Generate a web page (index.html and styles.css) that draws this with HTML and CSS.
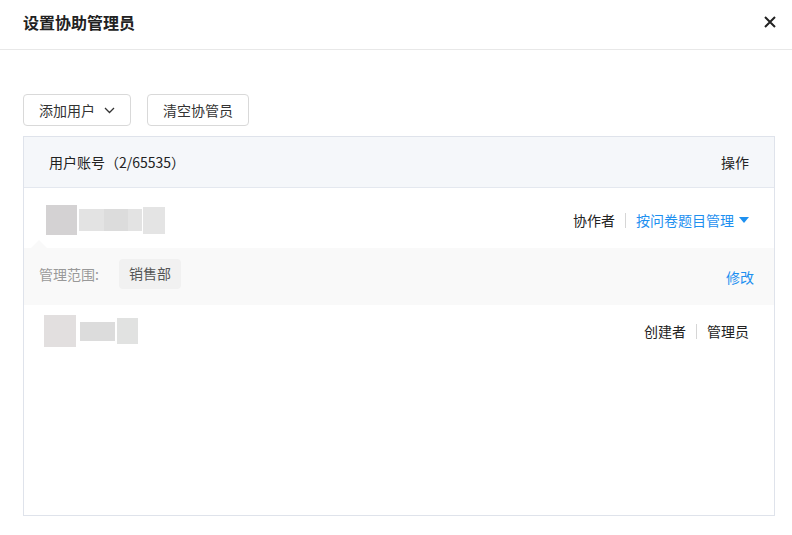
FILE: index.html
```html
<!DOCTYPE html>
<html lang="zh-CN">
<head>
    <meta charset="UTF-8">
    <meta name="viewport" content="width=device-width, initial-scale=1.0">
    <title>设置协助管理员</title>
    <link rel="stylesheet" href="styles.css">
</head>
<body>
    <div class="dialog">
        <div class="dialog-header">
            <h1 class="dialog-title">设置协助管理员</h1>
            <button class="close-btn" aria-label="关闭">
                <svg width="14" height="14" viewBox="0 0 14 14">
                    <path d="M2 2 L12 12 M12 2 L2 12" stroke="#222" stroke-width="2" fill="none"/>
                </svg>
            </button>
        </div>

        <div class="dialog-body">
            <div class="toolbar">
                <button class="btn">添加用户
                    <svg class="chevron" width="11" height="7" viewBox="0 0 11 7">
                        <path d="M1 1 L5.5 5.5 L10 1" stroke="#333" stroke-width="1.3" fill="none"/>
                    </svg>
                </button>
                <button class="btn">清空协管员</button>
            </div>

            <div class="user-table">
                <div class="table-head">
                    <span>用户账号（2/65535）</span>
                    <span>操作</span>
                </div>

                <!-- collaborator, scope expanded -->
                <div class="user-row row-first">
                    <div class="user-mask">
                        <span class="mask avatar-a"></span>
                        <span class="mask name-a">
                            <i class="seg"></i><i class="seg seg-dark"></i><i class="seg seg-end"></i>
                        </span>
                        <span class="mask tail-a"></span>
                    </div>
                    <div class="actions">
                        <span>协作者</span>
                        <span class="divider"></span>
                        <span class="link">按问卷题目管理</span>
                        <span class="caret-down"></span>
                    </div>
                </div>
                <div class="scope">
                    <span class="scope-label">管理范围:</span>
                    <span class="tag">销售部</span>
                    <span class="link scope-edit">修改</span>
                </div>

                <!-- owner -->
                <div class="user-row row-second">
                    <div class="user-mask">
                        <span class="mask avatar-b"></span>
                        <span class="mask name-b"></span>
                        <span class="mask tail-b"></span>
                    </div>
                    <div class="actions">
                        <span>创建者</span>
                        <span class="divider"></span>
                        <span>管理员</span>
                    </div>
                </div>
            </div>
        </div>
    </div>
</body>
</html>
```

FILE: styles.css
```css
* {
    box-sizing: border-box;
}
body {
    margin: 0;
    background: #fff;
    font-family: "Noto Sans CJK SC", "Noto Sans", sans-serif;
    font-size: 14px;
    color: #333;
}
.dialog {
    width: 792px;
    height: 535px;
    background: #fff;
}
.dialog-header {
    height: 50px;
    padding: 0 15px 0 23px;
    display: flex;
    align-items: center;
    justify-content: space-between;
    border-bottom: 1px solid #e8e8e8;
}
.dialog-title {
    margin: 0 0 5px;
    font-size: 16px;
    font-weight: bold;
    color: #222;
}
.close-btn {
    border: none;
    background: none;
    padding: 0;
    width: 14px;
    height: 14px;
    margin-bottom: 5px;
    cursor: pointer;
}
.dialog-body {
    padding: 44px 17px 0 23px;
}
.toolbar {
    display: flex;
    gap: 16px;
    margin-bottom: 10px;
}
.btn {
    height: 32px;
    padding: 0 15px;
    border: 1px solid #d9d9d9;
    border-radius: 4px;
    background: #fff;
    font-family: inherit;
    font-size: 14px;
    color: #333;
    display: flex;
    align-items: center;
    gap: 9px;
}
.chevron {
    margin-top: 1px;
}
.user-table {
    height: 380px;
    border: 1px solid #dfe3eb;
}
.table-head {
    height: 51px;
    padding: 0 25px;
    background: #f5f7fa;
    border-bottom: 1px solid #e4e8ef;
    display: flex;
    align-items: center;
    justify-content: space-between;
    color: #222;
}
.user-row {
    display: flex;
    align-items: center;
    justify-content: space-between;
}
.row-first {
    height: 60px;
    padding: 4px 25px 0 22px;
}
.row-second {
    height: 52px;
    padding: 0 25px 0 20px;
}
.user-mask {
    display: flex;
    align-items: center;
}
.mask {
    display: block;
}
.avatar-a {
    width: 31px;
    height: 30px;
    background: #d4d2d3;
}
.name-a {
    display: flex;
    margin-left: 2px;
    height: 22px;
}
.seg {
    width: 25px;
    background: #e3e3e3;
}
.seg-dark {
    width: 24px;
    background: #dcdcdc;
}
.seg-end {
    width: 14px;
}
.tail-a {
    width: 22px;
    height: 27px;
    margin-left: 1px;
    background: #e4e4e4;
}
.avatar-b {
    width: 32px;
    height: 32px;
    background: #e2dfdf;
}
.name-b {
    width: 35px;
    height: 19px;
    margin-left: 4px;
    background: #dcdcdc;
}
.tail-b {
    width: 21px;
    height: 26px;
    margin-left: 2px;
    background: #e1e2e1;
}
.actions {
    display: flex;
    align-items: center;
    color: #222;
}
.divider {
    width: 1px;
    height: 15px;
    background: #d6d6d6;
    margin: 0 10px;
}
.link {
    color: #1e90f0;
}
.caret-down {
    width: 0;
    height: 0;
    margin-left: 5px;
    border-left: 5px solid transparent;
    border-right: 5px solid transparent;
    border-top: 6px solid #1e90f0;
}
.scope {
    position: relative;
    height: 57px;
    padding: 0 20px 5px 15px;
    background: #f9f9f9;
    display: flex;
    align-items: center;
}
/* little pointer linking the scope panel to its row */
.scope::before {
    content: "";
    position: absolute;
    left: 7px;
    top: -8px;
    border-left: 8px solid transparent;
    border-right: 8px solid transparent;
    border-bottom: 8px solid #f9f9f9;
}
.scope-label {
    color: #999;
}
.tag {
    margin-left: 20px;
    height: 30px;
    padding: 0 10px 3px;
    border-radius: 4px;
    background: #f1f1f1;
    color: #555;
    display: flex;
    align-items: center;
}
.scope-edit {
    margin-left: auto;
    margin-top: 5px;
}
```
